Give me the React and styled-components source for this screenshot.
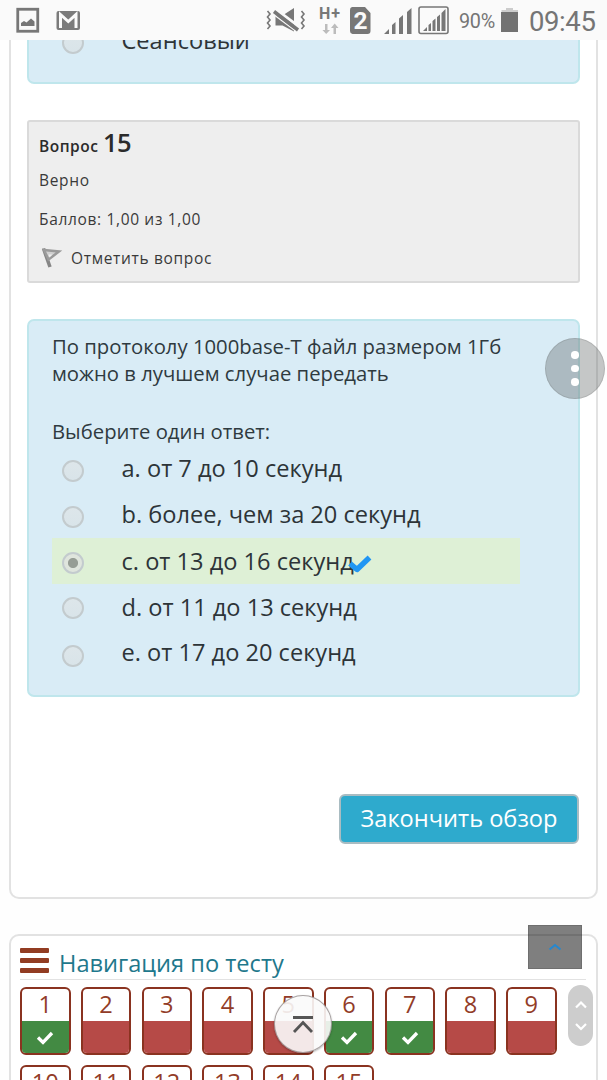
import React from "react";
import styled, { createGlobalStyle } from "styled-components";

const GlobalStyle = createGlobalStyle`
  *, *::before, *::after { box-sizing: border-box; }
  body { margin: 0; background: #fefefe; font-family: "Open Sans", "Noto Sans", sans-serif; }
`;

const Screen = styled.div`
  position: relative;
  width: 607px;
  height: 1080px;
  overflow: hidden;
  display: flex;
  flex-direction: column;
`;

const StatusBar = styled.header`
  flex: none;
  height: 40px;
  display: flex;
  align-items: center;
  background: #fafafa;
  color: #757575;
  font-family: Roboto, sans-serif;
`;

const StatusDrawing = styled.svg`
  display: block;
  flex: none;
`;

const Percent = styled.span`
  width: 40px;
  margin-left: 7px;
  font-size: 19.8px;
  line-height: 40px;
  letter-spacing: -0.3px;
  padding-top: 3px;
  white-space: nowrap;
`;

const Clock = styled.span`
  margin-left: -1px;
  font-size: 27.5px;
  line-height: 40px;
  padding-top: 3px;
  letter-spacing: -0.4px;
  white-space: nowrap;
`;

const Viewport = styled.main`
  flex: none;
  height: 1040px;
  padding: 0 9px;
  overflow: hidden;
`;

const Card = styled.section`
  border: 2px solid #e2e2e2;
  background: #fff;
`;

const QuizCard = styled(Card)`
  height: 859px;
  border-top: 0;
  border-radius: 0 0 10px 10px;
  padding: 0 16px;
`;

const NavCard = styled(Card)`
  height: 220px;
  margin-top: 35px;
  border-radius: 10px;
  padding: 10px 10px 0 9px;
`;

const BlueBox = styled.div`
  width: 553px;
  background: #d9ecf6;
  border: 2px solid #bfe6ec;
  border-radius: 7px;
`;

const PreviousQuestion = styled(BlueBox)`
  height: 44px;
  border-top: 0;
  border-radius: 0 0 7px 7px;
  padding-left: 23px;
  overflow: hidden;
`;

const Question = styled(BlueBox)`
  height: 378px;
  margin-top: 36px;
  padding: 12px 23px;
`;

const InfoBox = styled.aside`
  width: 553px;
  height: 163px;
  margin-top: 36px;
  padding: 0 10px;
  background: #eee;
  border: 2px solid #dadada;
  border-radius: 3px;
  color: #3a3a3a;
  font-size: 15.5px;
`;

const InfoHeading = styled.h3`
  margin: 0;
  height: 38px;
  line-height: 41px;
  font-size: 15.5px;
  font-weight: 600;
  color: #2b2b2b;
  letter-spacing: 0.5px;
`;

const InfoNumber = styled.span`
  font-size: 25.5px;
  letter-spacing: -0.4px;
`;

const InfoLine = styled.div`
  height: 39px;
  line-height: 38px;
  letter-spacing: 0.66px;
  display: flex;
  align-items: center;
  white-space: nowrap;
`;

const Flag = styled.svg`
  width: 24px;
  height: 24px;
  margin-right: 8px;
`;

const QuestionText = styled.p`
  margin: 0;
  font-size: 20.3px;
  line-height: 27px;
  color: #2f3a3f;
  white-space: nowrap;
`;

const Prompt = styled(QuestionText)`
  margin-top: 30px;
  margin-bottom: 1px;
  line-height: 28px;
`;

const Option = styled.label`
  display: flex;
  align-items: flex-start;
  width: 468px;
  height: 46px;
  padding-left: 10px;
  background: ${(p) => (p.$correct ? "#def0d6" : "transparent")};
  color: #2d3438;
`;

const Radio = styled.span`
  flex: none;
  width: 22px;
  height: 22px;
  margin-top: ${(p) => p.$top}px;
  border: 2px solid #c3cbce;
  border-radius: 50%;
  background: ${(p) =>
    p.$checked
      ? "radial-gradient(circle, #969d95 0 4.6px, #dfe5dd 5.5px)"
      : "linear-gradient(#dde6ea, #d9e4e9)"};
`;

const OptionText = styled.span`
  margin-left: 37.5px;
  margin-top: ${(p) => p.$top || 0}px;
  font-size: 23.6px;
  line-height: 46px;
  white-space: nowrap;
`;

const CorrectTick = styled.svg`
  width: 25px;
  height: 20px;
  margin-left: -7px;
  margin-top: 16px;
`;

const FinishButton = styled.button`
  display: block;
  width: 240px;
  height: 50px;
  margin: 97px 0 0 312px;
  padding: 0 0 1px;
  border: 2px solid #a9bcc2;
  border-radius: 6px;
  background: #2eaacd;
  color: #fff;
  font: 400 23.6px/43px "Open Sans", sans-serif;
  white-space: nowrap;
`;

const NavHeader = styled.div`
  display: flex;
  align-items: flex-start;
  width: 566px;
  height: 34px;
  border-bottom: 1px solid #e2e2e2;
`;

const NavTitle = styled.h2`
  margin: 0 0 0 10px;
  font-size: 23.6px;
  font-weight: 400;
  line-height: 34px;
  color: #1f788c;
  white-space: nowrap;
`;

const MenuBars = styled.span`
  width: 29px;
  height: 25px;
  margin-top: 2px;
  display: flex;
  flex-direction: column;
  justify-content: space-between;
`;

const MenuBar = styled.span`
  height: 5px;
  border-radius: 1px;
  background: #923c22;
`;

const QuestionGrid = styled.div`
  display: grid;
  grid-template-columns: repeat(9, 50.5px);
  gap: 10px 10.25px;
  margin-top: 7px;
`;

const Tile = styled.a`
  display: flex;
  flex-direction: column;
  height: 68px;
  border: 2px solid #8a3320;
  border-radius: 6px;
  overflow: hidden;
  color: #923c28;
`;

const TileNumber = styled.span`
  flex: none;
  height: 32px;
  font-size: 23.6px;
  line-height: 30px;
  text-align: center;
`;

const TileState = styled.span`
  flex: 1;
  display: flex;
  align-items: center;
  justify-content: center;
  padding-top: 1px;
  background: ${(p) => (p.$ok ? "#438a43" : "#b64a47")};
`;

const MoreButton = styled.div`
  position: absolute;
  left: 545px;
  top: 338px;
  width: 60px;
  height: 61px;
  border-radius: 50%;
  border: 1px solid rgba(90, 90, 90, 0.18);
  background: rgba(90, 95, 95, 0.35);
  display: flex;
  flex-direction: column;
  align-items: center;
  justify-content: center;
  gap: 6px;
`;

const Dot = styled.span`
  width: 7.5px;
  height: 7.5px;
  border-radius: 50%;
  background: #fff;
`;

const BackToTop = styled.div`
  position: absolute;
  left: 528px;
  top: 925px;
  width: 54px;
  height: 44px;
  background: rgba(0, 0, 0, 0.5);
  border: 1px solid rgba(0, 0, 0, 0.12);
`;

const ScrollTop = styled.div`
  position: absolute;
  left: 274px;
  top: 995px;
  width: 58px;
  height: 58px;
  border-radius: 50%;
  background: rgba(249, 249, 249, 0.9);
  border: 1px solid rgba(100, 90, 90, 0.55);
  box-shadow: 0 1px 2px rgba(0, 0, 0, 0.3);
`;

const ScrollHandle = styled.div`
  position: absolute;
  left: 568px;
  top: 985px;
  width: 25px;
  height: 61px;
  border-radius: 13px;
  background: #cdcdcd;
`;

const Overlay = styled.svg`
  display: block;
  width: 100%;
  height: 100%;
`;

const OPTIONS = [
  { text: "a. от 7 до 10 секунд", top: -1, radio: 14 },
  { text: "b. более, чем за 20 секунд", top: -1, radio: 14 },
  { text: "c. от 13 до 16 секунд", top: 0, radio: 13.5, checked: true },
  { text: "d. от 11 до 13 секунд", top: -0.5, radio: 13 },
  { text: "e. от 17 до 20 секунд", top: -1, radio: 14.5 },
];

const TILES = Array.from({ length: 15 }, (_, i) => ({
  n: i + 1,
  ok: [1, 6, 7].includes(i + 1),
}));

function NotificationIcons() {
  return (
    <StatusDrawing width="264" height="40" viewBox="0 0 264 40">
      <rect x="17.75" y="9.25" width="20" height="22" fill="none" stroke="#777" strokeWidth="2.8" />
      <path d="M21 26v-3l3-2 2.500 1.500 4.500-4 3.500 3v4.500z" fill="#777" />
      <rect x="56.500" y="11" width="23.500" height="19" rx="2" fill="#7b7b7b" />
      <path d="M60.500 28V14.500l7.800 7 7.700-7V28" fill="none" stroke="#fafafa" strokeWidth="3" />
    </StatusDrawing>
  );
}

function SystemIcons() {
  return (
    <StatusDrawing width="188" height="40" viewBox="264 0 188 40">
      <g fill="none" stroke="#777" strokeWidth="1.6">
        <path d="M267.500 11l2.500 3-2.500 3 2.500 3-2.500 3 2.500 3-2.500 3" />
        <path d="M301.500 11l2.500 3-2.500 3 2.500 3-2.500 3 2.500 3-2.500 3" />
      </g>
      <path d="M275.500 15.500v10h7L294 31.500V8l-11.500 7.500z" fill="#777" />
      <path d="M272 6.500l28 21" stroke="#fafafa" strokeWidth="3" />
      <path d="M273 14l24 18" stroke="#fafafa" strokeWidth="1.500" />
      <path d="M274 11.500l24 18.500" stroke="#777" strokeWidth="3.500" />
      <text x="319" y="19" fontFamily="Roboto, sans-serif" fontSize="16" fontWeight="700" textLength="21" fill="#777">H+</text>
      <g fill="#bcbcbc">
        <path d="M325 24h2.500v6h2.500l-3.800 4-3.800-4h2.600z" />
        <path d="M333.500 34h2.500v-6h2.500l-3.800-4.500-3.700 4.500h2.500z" />
      </g>
      <path d="M352 7h13l5.500 6v18a3 3 0 0 1-3 3h-15a3 3 0 0 1-2.500-3V10a3 3 0 0 1 2-3z" fill="#777" />
      <text x="353.500" y="29.300" fontFamily="Roboto, sans-serif" fontSize="24.500" fontWeight="700" fill="#fafafa">2</text>
      <g fill="#777">
        <path d="M384 34l5-5v5zM392 34V25l3.500-3v12zM399 34V18.500l4-3.500v19zM407 34V12l4.500-4v26z" />
        <path d="M423 31l4-4v4zM428.500 31v-6l2.500-2v8zM432.500 31V21l3-2.500V31zM437 31V17l3-2.500V31zM441.500 31V13l4-4v22z" />
      </g>
      <rect x="419" y="7" width="29" height="26.500" rx="2" fill="none" stroke="#777" strokeWidth="1.600" />
    </StatusDrawing>
  );
}

function BatteryIcon() {
  return (
    <StatusDrawing width="31" height="40" viewBox="499 0 31 40">
      <path d="M506 8h7v2h5v3h-16.500v-3h4.500z" fill="#ccc" />
      <path d="M501 12h17v20h-17z" fill="#727272" />
    </StatusDrawing>
  );
}

function TileTick() {
  return (
    <svg width="18" height="14" viewBox="0 0 18 14">
      <path d="M2 6.500l5 5L16 2" fill="none" stroke="#fff" strokeWidth="3.300" />
    </svg>
  );
}

export default function App() {
  return (
    <>
      <GlobalStyle />
      <Screen>
        <StatusBar>
          <NotificationIcons />
          <SystemIcons />
          <Percent>90%</Percent>
          <BatteryIcon />
          <Clock>09:45</Clock>
        </StatusBar>

        <Viewport>
          <QuizCard>
            <PreviousQuestion>
              <Option>
                <Radio $top={-8} />
                <OptionText $top={-23}>Сеансовый</OptionText>
              </Option>
            </PreviousQuestion>

            <InfoBox>
              <InfoHeading>
                Вопрос <InfoNumber>15</InfoNumber>
              </InfoHeading>
              <InfoLine>Верно</InfoLine>
              <InfoLine>Баллов: 1,00 из 1,00</InfoLine>
              <InfoLine>
                <Flag viewBox="0 0 24 24" fill="none">
                  <path d="M4.500 2.500l6.500 18.500" stroke="#858585" strokeWidth="3.500" />
                  <path d="M5 4l15 1.500L9.500 13.500z" fill="#d0d0d0" stroke="#9a9a9a" strokeWidth="2.500" />
                  <path d="M9.500 8.500h4l-3 3z" fill="#eee" />
                </Flag>
                Отметить вопрос
              </InfoLine>
            </InfoBox>

            <Question>
              <QuestionText>По протоколу 1000base-T файл размером 1Гб</QuestionText>
              <QuestionText>можно в лучшем случае передать</QuestionText>
              <Prompt>Выберите один ответ:</Prompt>
              {OPTIONS.map((o) => (
                <Option key={o.text} $correct={o.checked}>
                  <Radio $top={o.radio} $checked={o.checked} />
                  <OptionText $top={o.top}>{o.text}</OptionText>
                  {o.checked && (
                    <CorrectTick viewBox="0 0 25 20">
                      <path d="M3 9.500l7 6L22.500 3.500" fill="none" stroke="#2196f3" strokeWidth="5.500" strokeLinejoin="round" />
                    </CorrectTick>
                  )}
                </Option>
              ))}
            </Question>

            <FinishButton>Закончить обзор</FinishButton>
          </QuizCard>

          <NavCard>
            <NavHeader>
              <MenuBars>
                <MenuBar />
                <MenuBar />
                <MenuBar />
              </MenuBars>
              <NavTitle>Навигация по тесту</NavTitle>
            </NavHeader>
            <QuestionGrid>
              {TILES.map((t) => (
                <Tile key={t.n}>
                  <TileNumber>{t.n}</TileNumber>
                  <TileState $ok={t.ok}>{t.ok && <TileTick />}</TileState>
                </Tile>
              ))}
            </QuestionGrid>
          </NavCard>
        </Viewport>

        <MoreButton>
          <Dot />
          <Dot />
          <Dot />
        </MoreButton>
        <BackToTop>
          <Overlay viewBox="529 926 52 42">
            <path d="M549.500 949.500l5.500-4.500 5.500 4.500" fill="none" stroke="#2688cf" strokeWidth="2" />
          </Overlay>
        </BackToTop>
        <ScrollHandle>
          <Overlay viewBox="0 0 25 61" fill="none" stroke="#fff" strokeWidth="2.200">
            <path d="M8 22.500l5-5 5 5M8 39l5 5 5-5" />
          </Overlay>
        </ScrollHandle>
        <ScrollTop>
          <Overlay viewBox="275 996 56 56" fill="none" stroke="#555" strokeWidth="2.800">
            <path d="M293 1017.500h20M294 1032l9-9.500 9 9.500" />
          </Overlay>
        </ScrollTop>
      </Screen>
    </>
  );
}
